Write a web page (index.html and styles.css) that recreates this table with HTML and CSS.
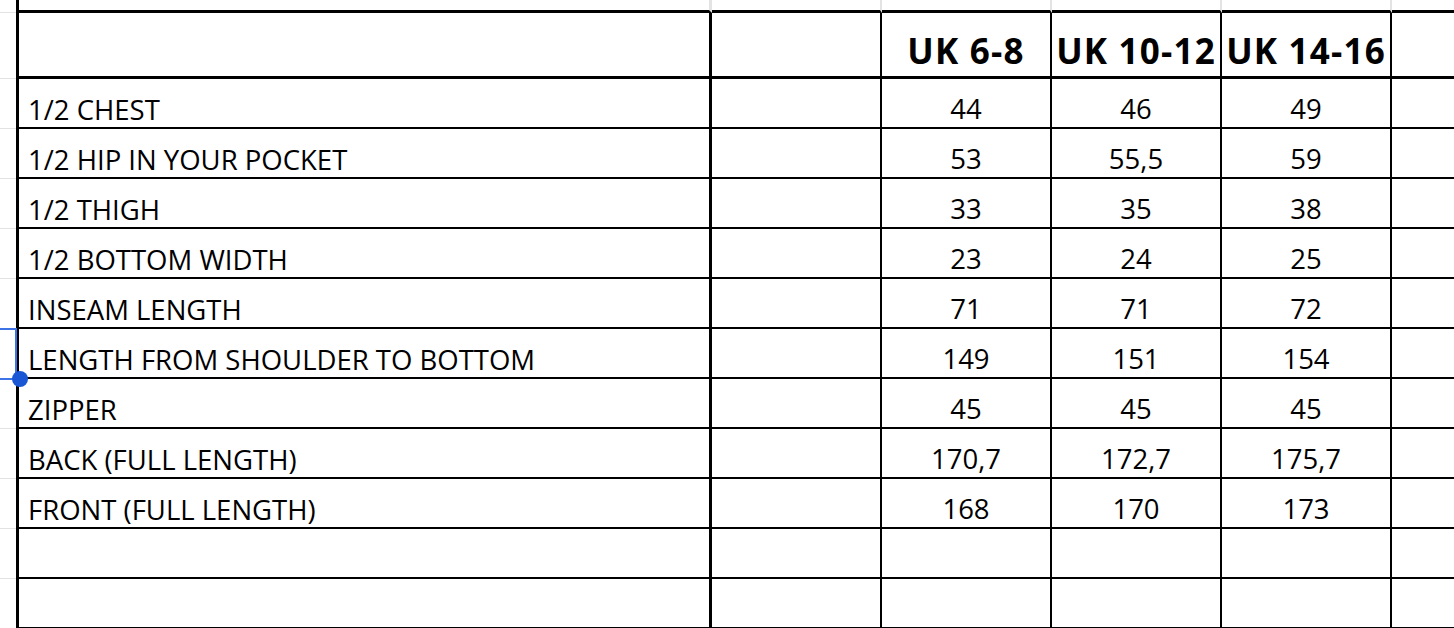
FILE: index.html
```html
<!DOCTYPE html>
<html lang="en">
<head>
<meta charset="utf-8">
<title>Size chart</title>
<link rel="stylesheet" href="styles.css">
</head>
<body>
<table class="sheet">
  <colgroup>
    <col class="c-a"><col class="c-b"><col class="c-c"><col class="c-n"><col class="c-n"><col class="c-n"><col class="c-g">
  </colgroup>
  <tbody>
    <tr class="r-top"><td class="a"></td><td class="b"></td><td></td><td></td><td></td><td></td><td class="g"></td></tr>
    <tr class="r-head"><td class="a"></td><td class="b"></td><td></td><td class="h">UK 6-8</td><td class="h">UK 10-12</td><td class="h">UK 14-16</td><td class="g"></td></tr>
    <tr class="r"><td class="a"></td><td class="b">1/2 CHEST</td><td></td><td class="n">44</td><td class="n">46</td><td class="n">49</td><td class="g"></td></tr>
    <tr class="r"><td class="a"></td><td class="b">1/2 HIP IN YOUR POCKET</td><td></td><td class="n">53</td><td class="n">55,5</td><td class="n">59</td><td class="g"></td></tr>
    <tr class="r"><td class="a"></td><td class="b">1/2 THIGH</td><td></td><td class="n">33</td><td class="n">35</td><td class="n">38</td><td class="g"></td></tr>
    <tr class="r"><td class="a"></td><td class="b">1/2 BOTTOM WIDTH</td><td></td><td class="n">23</td><td class="n">24</td><td class="n">25</td><td class="g"></td></tr>
    <tr class="r"><td class="a"></td><td class="b">INSEAM LENGTH</td><td></td><td class="n">71</td><td class="n">71</td><td class="n">72</td><td class="g"></td></tr>
    <tr class="r"><td class="a sel-cell"><div class="sel"></div><div class="handle"></div></td><td class="b">LENGTH FROM SHOULDER TO BOTTOM</td><td></td><td class="n">149</td><td class="n">151</td><td class="n">154</td><td class="g"></td></tr>
    <tr class="r"><td class="a"></td><td class="b">ZIPPER</td><td></td><td class="n">45</td><td class="n">45</td><td class="n">45</td><td class="g"></td></tr>
    <tr class="r"><td class="a"></td><td class="b">BACK (FULL LENGTH)</td><td></td><td class="n">170,7</td><td class="n">172,7</td><td class="n">175,7</td><td class="g"></td></tr>
    <tr class="r"><td class="a"></td><td class="b">FRONT (FULL LENGTH)</td><td></td><td class="n">168</td><td class="n">170</td><td class="n">173</td><td class="g"></td></tr>
    <tr class="r"><td class="a"></td><td class="b"></td><td></td><td></td><td></td><td></td><td class="g"></td></tr>
    <tr class="r"><td class="a"></td><td class="b"></td><td></td><td></td><td></td><td></td><td class="g"></td></tr>
  </tbody>
</table>
</body>
</html>
```
FILE: styles.css
```css
html, body {
  margin: 0;
  padding: 0;
  overflow: hidden;
  background: #fff;
}

.sheet {
  border-collapse: separate;
  border-spacing: 0;
  table-layout: fixed;
  width: 1492px;
  font-family: "Open Sans", "Liberation Sans", sans-serif;
  color: #000;
}

.c-a { width: 19px; }
.c-b { width: 693px; }
.c-c { width: 170px; }
.c-n { width: 170px; }
.c-g { width: 100px; }

.sheet td {
  padding: 0;
  border-right: 2px solid #000;
  border-bottom: 2px solid #000;
  vertical-align: bottom;
  white-space: nowrap;
  overflow: visible;
}

.r-top { height: 13px; }
.r-head { height: 66px; }
.r { height: 50px; }

.r-top td {
  border-bottom-width: 3px;
  border-right-color: #e3e3e3;
}

.r-head td { border-bottom-width: 3px; }

.sheet td.a {
  border-right: 3px solid #000;
  border-bottom: 0;
  box-shadow: inset 0 -1px 0 #e2e2e2;
  position: relative;
}

.sheet td.b { border-right-width: 3px; }
.sheet td.g { border-right: 0; }

.b {
  font-size: 27.5px;
  line-height: 27px;
  font-weight: 500;
  padding-left: 9px !important;
  padding-bottom: 4px !important;
}

.n {
  font-size: 27.5px;
  line-height: 27px;
  font-weight: 500;
  text-align: center;
  padding-bottom: 5px !important;
}

.h {
  font-size: 35px;
  line-height: 34px;
  font-weight: 700;
  letter-spacing: 1.2px;
  text-align: center;
  padding-bottom: 8px !important;
}

.sel {
  position: absolute;
  left: -10px;
  right: -1px;
  top: -1px;
  bottom: -1px;
  border: 2px solid #3d73e6;
}

.handle {
  position: absolute;
  left: 12px;
  top: 42px;
  width: 16px;
  height: 16px;
  border-radius: 50%;
  background: #1a57d4;
  z-index: 2;
}
```
